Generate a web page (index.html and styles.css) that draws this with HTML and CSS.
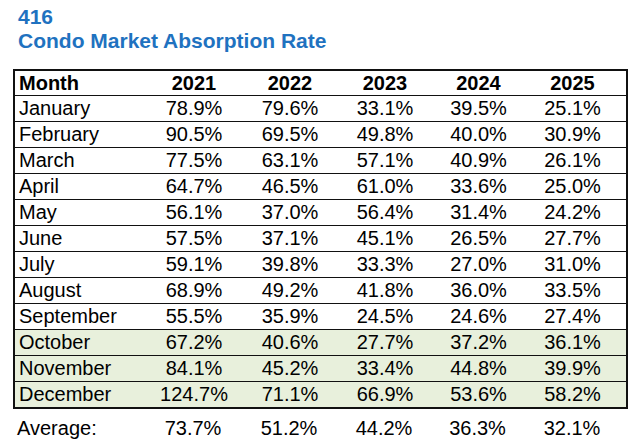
FILE: index.html
```html
<!DOCTYPE html>
<html>
<head>
<meta charset="utf-8">
<link rel="stylesheet" href="styles.css">
</head>
<body>
<div class="title">
  <div>416</div>
  <div>Condo Market Absorption Rate</div>
</div>
<table class="grid">
  <colgroup>
    <col class="c-month"><col class="c-y1"><col class="c-y2"><col class="c-y3"><col class="c-y4"><col class="c-y5">
  </colgroup>
  <thead>
    <tr><th class="month">Month</th><th>2021</th><th>2022</th><th>2023</th><th>2024</th><th>2025</th></tr>
  </thead>
  <tbody>
    <tr><td class="month">January</td><td>78.9%</td><td>79.6%</td><td>33.1%</td><td>39.5%</td><td>25.1%</td></tr>
    <tr><td class="month">February</td><td>90.5%</td><td>69.5%</td><td>49.8%</td><td>40.0%</td><td>30.9%</td></tr>
    <tr><td class="month">March</td><td>77.5%</td><td>63.1%</td><td>57.1%</td><td>40.9%</td><td>26.1%</td></tr>
    <tr><td class="month">April</td><td>64.7%</td><td>46.5%</td><td>61.0%</td><td>33.6%</td><td>25.0%</td></tr>
    <tr><td class="month">May</td><td>56.1%</td><td>37.0%</td><td>56.4%</td><td>31.4%</td><td>24.2%</td></tr>
    <tr><td class="month">June</td><td>57.5%</td><td>37.1%</td><td>45.1%</td><td>26.5%</td><td>27.7%</td></tr>
    <tr><td class="month">July</td><td>59.1%</td><td>39.8%</td><td>33.3%</td><td>27.0%</td><td>31.0%</td></tr>
    <tr><td class="month">August</td><td>68.9%</td><td>49.2%</td><td>41.8%</td><td>36.0%</td><td>33.5%</td></tr>
    <tr><td class="month">September</td><td>55.5%</td><td>35.9%</td><td>24.5%</td><td>24.6%</td><td>27.4%</td></tr>
    <tr class="hl"><td class="month">October</td><td>67.2%</td><td>40.6%</td><td>27.7%</td><td>37.2%</td><td>36.1%</td></tr>
    <tr class="hl"><td class="month">November</td><td>84.1%</td><td>45.2%</td><td>33.4%</td><td>44.8%</td><td>39.9%</td></tr>
    <tr class="hl"><td class="month">December</td><td>124.7%</td><td>71.1%</td><td>66.9%</td><td>53.6%</td><td>58.2%</td></tr>
  </tbody>
</table>
<table class="avg">
  <colgroup>
    <col class="c-month"><col class="c-y1"><col class="c-y2"><col class="c-y3"><col class="c-y4"><col class="c-y5">
  </colgroup>
  <tr><td class="month">Average:</td><td>73.7%</td><td>51.2%</td><td>44.2%</td><td>36.3%</td><td>32.1%</td></tr>
</table>
</body>
</html>
```
FILE: styles.css
```css
html, body {
  margin: 0;
  padding: 0;
  background: #ffffff;
}
body {
  font-family: "Liberation Sans", Arial, sans-serif;
  color: #000;
}
.title {
  padding: 5px 0 0 18px;
  font-size: 21px;
  line-height: 24px;
  font-weight: bold;
  color: #1f72c0;
}
table {
  border-collapse: collapse;
  table-layout: fixed;
  width: 613px;
  margin-left: 13px;
  font-size: 20px;
}
.grid {
  margin-top: 16px;
  border: 2px solid #111;
}
.c-month { width: 132px; }
.c-y1 { width: 96px; }
.c-y2 { width: 96px; }
.c-y3 { width: 94px; }
.c-y4 { width: 93px; }
.c-y5 { width: 102px; }
th, td {
  padding: 0;
  text-align: center;
  line-height: 25px;
  white-space: nowrap;
}
th {
  font-weight: bold;
  line-height: 24px;
}
.grid tr {
  border-bottom: 1px solid #111;
}
th.month, td.month {
  text-align: left;
  padding-left: 4px;
}
td:last-child, th:last-child {
  padding-right: 6px;
}
.hl td {
  background: #e8f0dc;
}
.avg {
  margin-top: 6px;
}
.avg td {
  line-height: 26px;
}
```
